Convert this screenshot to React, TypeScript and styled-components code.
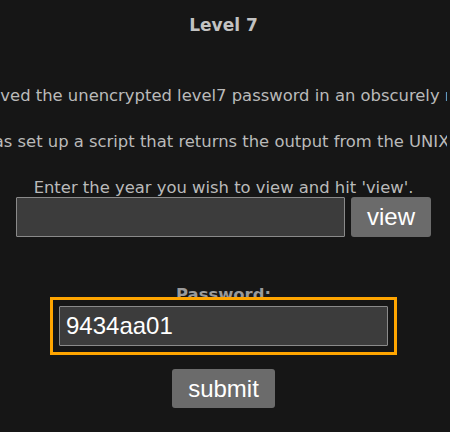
import React from "react";
import styled, { createGlobalStyle } from "styled-components";

const Global = createGlobalStyle`
  html, body {
    margin: 0;
    padding: 0;
    background: #161616;
    overflow: hidden;
  }
  body {
    font-family: "DejaVu Sans", Verdana, Tahoma, sans-serif;
  }
`;

const Page = styled.div`
  width: 447px;
  height: 432px;
  display: flex;
  flex-direction: column;
  align-items: center;
  overflow: hidden;
  background: #161616;
`;

const Title = styled.h1`
  margin: 14px 0 0;
  font-size: 17px;
  line-height: 23px;
  font-weight: bold;
  color: #c2c2c2;
  white-space: nowrap;
`;

const Line = styled.p<{ $top: number }>`
  margin: ${(p) => p.$top}px 0 0;
  font-size: 16.4px;
  line-height: 23px;
  color: #bababa;
  white-space: nowrap;
`;

const Row = styled.div<{ $top: number }>`
  margin-top: ${(p) => p.$top}px;
  display: flex;
  gap: 6px;
  align-items: center;
`;

const TextField = styled.input`
  box-sizing: border-box;
  width: 329px;
  height: 40px;
  padding: 0 6px;
  background: #3c3c3c;
  border: 1px solid #8a8a8a;
  border-radius: 1px;
  color: #ffffff;
  font-family: "Liberation Sans", Arial, sans-serif;
  font-size: 24px;
  outline: none;
`;

const Highlight = styled.div`
  outline: 3px solid #ffa500;
  outline-offset: 6px;
  display: flex;
`;

const Button = styled.button`
  box-sizing: border-box;
  height: 40px;
  padding: 0 16px;
  background: #6b6b6b;
  border: none;
  border-radius: 3px;
  color: #ffffff;
  font-family: "Liberation Sans", Arial, sans-serif;
  font-size: 24px;
  line-height: 40px;
`;

const SubmitButton = styled(Button)`
  margin-top: 23px;
  height: 39px;
`;

const Label = styled.label`
  margin-top: 46px;
  font-size: 16.4px;
  line-height: 23px;
  font-weight: bold;
  color: #9a9a9a;
  white-space: nowrap;
`;

export default function App() {
  return (
    <>
      <Global />
      <Page>
        <Title>Level 7</Title>
        <Line $top={47}>
          saved the unencrypted level7 password in an obscurely na
        </Line>
        <Line $top={23}>
          has set up a script that returns the output from the UNIX c
        </Line>
        <Line $top={23}>Enter the year you wish to view and hit 'view'.</Line>
        <Row $top={-2}>
          <TextField type="text" defaultValue="" />
          <Button>view</Button>
        </Row>
        <Label>Password:</Label>
        <Highlight>
          <TextField type="text" defaultValue="9434aa01" />
        </Highlight>
        <SubmitButton>submit</SubmitButton>
      </Page>
    </>
  );
}
